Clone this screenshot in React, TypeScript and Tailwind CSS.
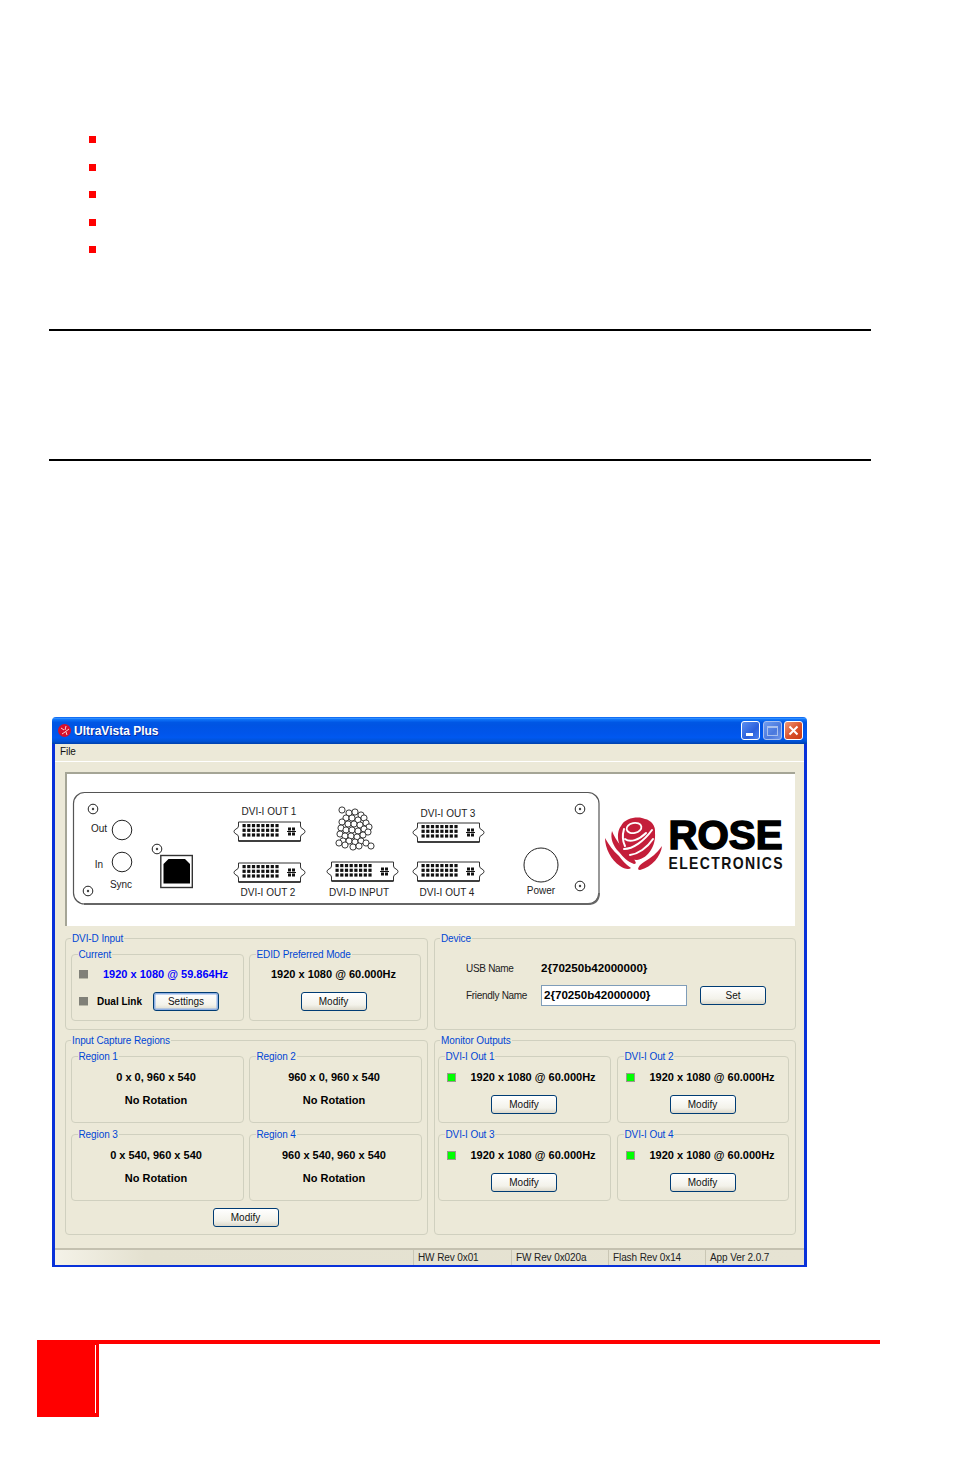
import React from "react";

const font = "font-['Liberation_Sans',Arial,sans-serif]";

const fibers = [
  [342, 810], [349, 813], [355, 812], [361, 815], [346, 818], [352, 818], [358, 820], [364, 818],
  [342, 822], [348, 824], [354, 824], [360, 825], [366, 823], [369, 827], [341, 828], [346, 830],
  [352, 830], [358, 831], [364, 829], [340, 834], [345, 836], [351, 836], [357, 837], [363, 835],
  [368, 832], [343, 841], [349, 841], [355, 842], [361, 841], [339, 843], [345, 845], [353, 847],
  [359, 846], [366, 843], [371, 846],
];

const Connector = ({ x, y }: { x: number; y: number }) => (
  <g transform={`translate(${x} ${y})`}>
    <path
      d="M4.5 0H66.5V4Q66.5 6 69 7Q71 8 71 9.5Q71 11 69 12Q66.5 13 66.5 15V19H4.5V15Q4.5 13 2 12Q0 11 0 9.5Q0 8 2 7Q4.5 6 4.5 4Z"
      fill="#fff"
      stroke="#333"
      strokeWidth="1"
    />
    <path d="M4.5 19H66.5" stroke="#222" strokeWidth="1.5" />
    {[0, 1, 2].map((r) =>
      [0, 1, 2, 3, 4, 5, 6, 7].map((c) => (
        <rect key={`${r}-${c}`} x={8.5 + c * 4.7} y={2 + r * 4.7} width="3.2" height="3.2" fill="#111" />
      ))
    )}
    <path d="M53 9.5H62" stroke="#111" strokeWidth="1" />
    <rect x="54" y="5.5" width="3" height="3" fill="#111" />
    <rect x="58" y="5.5" width="3" height="3" fill="#111" />
    <rect x="54" y="10.5" width="3" height="3" fill="#111" />
    <rect x="58" y="10.5" width="3" height="3" fill="#111" />
  </g>
);

const Screw = ({ x, y }: { x: number; y: number }) => (
  <g>
    <circle cx={x} cy={y} r="4.8" fill="#fff" stroke="#222" strokeWidth="1" />
    <circle cx={x} cy={y} r="1.2" fill="#444" />
  </g>
);

const Label = ({ x, y, children }: { x: number; y: number; children: React.ReactNode }) => (
  <text x={x} y={y} textAnchor="middle" fontSize="10" fill="#222" fontFamily="Liberation Sans, Arial, sans-serif">
    {children}
  </text>
);

const RearPanel = () => (
  <svg width="730" height="154" viewBox="65 772 730 154" className="block">
    <rect x="73.5" y="792.5" width="525.5" height="111.5" rx="11" fill="#fff" stroke="#555" strokeWidth="1.2" />
    <path d="M84 904H588Q599 904 599 893" fill="none" stroke="#666" strokeWidth="1.8" />
    <Screw x={93} y={809} />
    <Screw x={88} y={891} />
    <Screw x={157} y={849} />
    <Screw x={580} y={809} />
    <Screw x={580} y={886} />
    <circle cx="122" cy="830" r="9.8" fill="#fff" stroke="#222" />
    <circle cx="122" cy="862" r="9.8" fill="#fff" stroke="#222" />
    <circle cx="541" cy="865" r="17" fill="#fff" stroke="#222" />
    <Label x={99} y={832}>Out</Label>
    <Label x={99} y={868}>In</Label>
    <Label x={121} y={888}>Sync</Label>
    <Label x={541} y={894}>Power</Label>
    <Label x={269} y={815}>DVI-I OUT 1</Label>
    <Label x={268} y={896}>DVI-I OUT 2</Label>
    <Label x={359} y={896}>DVI-D INPUT</Label>
    <Label x={448} y={817}>DVI-I OUT 3</Label>
    <Label x={447} y={896}>DVI-I OUT 4</Label>
    <rect x="160.8" y="855.5" width="31.5" height="32" fill="#fff" stroke="#333" strokeWidth="1.4" />
    <path d="M163.5 864L168.5 859H185L190 864V883.5H163.5Z" fill="#000" />
    <Connector x={234} y={822} />
    <Connector x={234} y={863} />
    <Connector x={327} y={862} />
    <Connector x={413} y={823} />
    <Connector x={413} y={862} />
    {fibers.map(([x, y]) => (
      <circle key={`${x}-${y}`} cx={x} cy={y} r="3.1" fill="#fff" stroke="#222" strokeWidth="0.9" />
    ))}
    {/* rose logo */}
    <g fill="#c41e3a">
      <path d="M605 838C605 848 611 860 620 866C624 869 629 870 631 868C625 864 622 860 619 856C613 851 609 845 605 838Z" />
      <path d="M662 846C661 856 652 867 640 870C636 870 639 865 644 862C651 858 657 853 662 846Z" />
      <path d="M612 831C610 838 613 846 619 852C623 857 628 862 634 864C638 864 635 860 630 855C623 849 616 841 612 831Z" />
      <path d="M621 826C625 817 640 816 645 819C651 820 656 826 655 833C656 845 649 858 637 860C628 860 621 853 619 843C617 836 618 830 621 826Z" />
    </g>
    <ellipse cx="634" cy="828" rx="7.5" ry="5" fill="none" stroke="#fff" strokeWidth="1.8" transform="rotate(-12 634 828)" />
    <g fill="none" stroke="#fff" strokeWidth="2" strokeLinecap="round">
      <path d="M624 829C622 836 623 842 625 846" />
      <path d="M625 839C630 843 639 840 646 833" />
      <path d="M624 849C633 849 644 841 652 830" />
      <path d="M630 855C638 854 647 848 653 839" />
    </g>
    <text
      x="668.5"
      y="848.5"
      fontSize="41.5"
      fontWeight="700"
      fill="#000"
      stroke="#000"
      strokeWidth="1.6"
      textLength="114"
      lengthAdjust="spacingAndGlyphs"
      fontFamily="Liberation Sans, Arial, sans-serif"
    >
      ROSE
    </text>
    <text
      transform="translate(668.5 869) scale(1 1.22)"
      fontSize="14"
      fontWeight="700"
      fill="#111"
      textLength="114"
      fontFamily="Liberation Sans, Arial, sans-serif"
    >
      ELECTRONICS
    </text>
  </svg>
);

const Group = ({
  title,
  className,
  outer,
  children,
}: {
  title: string;
  className: string;
  outer?: boolean;
  children?: React.ReactNode;
}) => (
  <div className={`relative border border-[#d0d0bf] rounded-[4px] ${className}`}>
    <span
      className={`absolute -top-[7px] ${
        outer ? "left-[5px]" : "left-[5.5px]"
      } bg-[#ece9d8] px-[1px] text-[10px] tracking-[-0.1px] leading-[14px] text-[#0046d5] whitespace-nowrap`}
    >
      {title}
    </span>
    {children}
  </div>
);

const Btn = ({ children, focused }: { children: React.ReactNode; focused?: boolean }) => (
  <button
    className={`block w-[66px] h-[19px] rounded-[3px] border border-[#003c74] bg-[linear-gradient(#ffffff,#f3f2ea_70%,#dcd8ca)] text-[10px] leading-none text-[#111] ${
      focused ? "shadow-[inset_0_0_0_1.5px_#8fb0e4]" : ""
    }`}
  >
    {children}
  </button>
);

const Led = ({ on }: { on?: boolean }) => (
  <span
    className={`block shrink-0 w-[9px] h-[9px] ${
      on ? "bg-[#00ff00] border border-[#9a9a8c]" : "bg-[#808078] border-b border-[#b8b8a8]"
    }`}
  />
);

const Bold = ({ children, className = "" }: { children: React.ReactNode; className?: string }) => (
  <span className={`font-bold text-[11px] leading-[14px] text-black whitespace-nowrap ${className}`}>{children}</span>
);

const Region = ({ title, pos }: { title: string; pos: string }) => (
  <Group title={title} className="w-[173px] h-[67px] flex flex-col items-center pt-[13px] gap-[9px] pr-[3px]">
    <Bold>{pos}</Bold>
    <Bold>No Rotation</Bold>
  </Group>
);

const Output = ({ title, width }: { title: string; width: string }) => (
  <Group title={title} className={`${width} h-[67px] flex flex-col items-center pt-[13px]`}>
    <div className="self-start flex items-center pl-[8px] gap-[14.5px] h-[14px]">
      <Led on />
      <Bold>1920 x 1080 @ 60.000Hz</Bold>
    </div>
    <div className="mt-[11px] pr-[1px]">
      <Btn>Modify</Btn>
    </div>
  </Group>
);

const StatusCell = ({ children, width }: { children: React.ReactNode; width: string }) => (
  <div className={`${width} h-full border-l border-[#c9c6b4] pl-[4px] text-[10px] tracking-[-0.1px] leading-[16px] text-[#222] whitespace-nowrap`}>
    {children}
  </div>
);

const Window = () => (
  <div className={`ml-[52px] w-[755px] h-[550px] flex flex-col ${font}`}>
    <div className="h-[27px] shrink-0 rounded-t-[4px] flex items-center pl-[5px] pr-[4px] bg-[linear-gradient(#0058ee_0%,#3593ff_5%,#0f74f8_9%,#0057e5_20%,#0054e3_30%,#0055eb_60%,#0058f0_76%,#0052d6_90%,#0040ab_100%)]">
      <svg width="15" height="15" viewBox="0 0 15 15" className="shrink-0">
        <circle cx="7.5" cy="7.5" r="6.5" fill="#d8102c" />
        <path d="M4 5L7 7M9 3L8 7M12 6L8 9M5 11L8 9M10 12L9 9" stroke="#ffd0d0" strokeWidth="1" />
      </svg>
      <span className="ml-[2px] font-bold text-[12px] text-white [text-shadow:1px_1px_0_#0f2f9a] whitespace-nowrap">UltraVista Plus</span>
      <div className="ml-auto flex gap-[2.5px]">
        <div className="w-[19px] h-[19px] rounded-[3px] border border-white flex items-end pl-[4px] pb-[3px] bg-[linear-gradient(135deg,#5d8ff0,#2a5fdc_60%,#4a7fef)]">
          <span className="block w-[7px] h-[3px] bg-white" />
        </div>
        <div className="w-[19px] h-[19px] rounded-[3px] border border-[#a9c0ee] flex items-center justify-center bg-[linear-gradient(135deg,#6f9cf0,#4a78dd_60%,#6f96ea)]">
          <span className="block w-[11px] h-[10px] border border-[#a9c0ee] border-t-2" />
        </div>
        <div className="w-[19px] h-[19px] rounded-[3px] border border-white flex items-center justify-center bg-[linear-gradient(135deg,#ef9a78,#d9502a_55%,#c83a16)]">
          <svg width="11" height="11" viewBox="0 0 11 11">
            <path d="M1.5 1.5L9.5 9.5M9.5 1.5L1.5 9.5" stroke="#fff" strokeWidth="2" />
          </svg>
        </div>
      </div>
    </div>

    <div className="flex-1 flex flex-col min-h-0 border-x-[3px] border-b-[2px] border-[#0831d9] bg-[#ece9d8]">
      <div className="h-[18px] shrink-0 border-b border-white pl-[5px] text-[10px] tracking-[-0.1px] leading-[15px] text-[#111]">File</div>

      <div className="ml-[10px] mt-[10px] w-[730px] h-[154px] shrink-0 bg-white border-t-2 border-l-2 border-t-[#a5a596] border-l-[#a5a596] overflow-hidden [&>svg]:-mt-[2px] [&>svg]:-ml-[2px]">
        <RearPanel />
      </div>

      <div className="ml-[10px] mt-[12px] flex gap-[6px]">
        <Group outer title="DVI-D Input" className="w-[363px] h-[92px] flex gap-[5px] pl-[5px] pt-[15px]">
          <Group title="Current" className="w-[173px] h-[67px] px-[7px]">
            <div className="flex items-center h-[14px] mt-[12px] gap-[15px]">
              <Led />
              <span className="font-bold text-[11px] leading-[14px] text-[#0000ff] whitespace-nowrap">1920 x 1080 @ 59.864Hz</span>
            </div>
            <div className="flex items-center mt-[11px] gap-[9px] h-[19px]">
              <Led />
              <span className="font-bold text-[10px] leading-[14px] text-black whitespace-nowrap">Dual Link</span>
              <div className="ml-[2px]">
                <Btn focused>Settings</Btn>
              </div>
            </div>
          </Group>
          <Group title="EDID Preferred Mode" className="w-[172px] h-[67px] flex flex-col items-center pr-[3px]">
            <Bold className="mt-[12px]">1920 x 1080 @ 60.000Hz</Bold>
            <div className="mt-[11px]">
              <Btn>Modify</Btn>
            </div>
          </Group>
        </Group>

        <Group outer title="Device" className="w-[362px] h-[92px] pl-[31px]">
          <div className="flex items-center h-[14px] mt-[22px]">
            <span className="w-[75px] text-[10px] tracking-[-0.3px] text-[#222] whitespace-nowrap">USB Name</span>
            <span className="font-bold text-[11.6px] leading-[14px] text-black whitespace-nowrap">2{"{70250b42000000}"}</span>
          </div>
          <div className="flex items-center h-[21px] mt-[10px]">
            <span className="w-[75px] text-[10px] tracking-[-0.3px] text-[#222] whitespace-nowrap">Friendly Name</span>
            <div className="w-[146px] h-[21px] bg-white border border-[#7f9db9] pl-[2px] font-bold text-[11.6px] leading-[18px] text-black whitespace-nowrap">
              2{"{70250b42000000}"}
            </div>
            <div className="ml-[13px]">
              <Btn>Set</Btn>
            </div>
          </div>
        </Group>
      </div>

      <div className="ml-[10px] mt-[10px] flex gap-[6px]">
        <Group outer title="Input Capture Regions" className="w-[363px] h-[195px] pl-[5px] pt-[15px]">
          <div className="flex gap-[5px]">
            <Region title="Region 1" pos="0 x 0, 960 x 540" />
            <Region title="Region 2" pos="960 x 0, 960 x 540" />
          </div>
          <div className="flex gap-[5px] mt-[11px]">
            <Region title="Region 3" pos="0 x 540, 960 x 540" />
            <Region title="Region 4" pos="960 x 540, 960 x 540" />
          </div>
          <div className="flex justify-center pr-[7px] mt-[7px]">
            <Btn>Modify</Btn>
          </div>
        </Group>

        <Group outer title="Monitor Outputs" className="w-[362px] h-[195px] pl-[3px] pt-[15px]">
          <div className="flex gap-[6px]">
            <Output title="DVI-I Out 1" width="w-[173px]" />
            <Output title="DVI-I Out 2" width="w-[172px]" />
          </div>
          <div className="flex gap-[6px] mt-[11px]">
            <Output title="DVI-I Out 3" width="w-[173px]" />
            <Output title="DVI-I Out 4" width="w-[172px]" />
          </div>
        </Group>
      </div>

      <div className="mt-auto h-[17px] shrink-0 flex border-t-2 border-[#c4c1b0] bg-[linear-gradient(90deg,#f4f2e8,#e4e1d0_12%,#e6e3d3)]">
        <div className="w-[358px]" />
        <StatusCell width="w-[98px]">HW Rev 0x01</StatusCell>
        <StatusCell width="w-[97px]">FW Rev 0x020a</StatusCell>
        <StatusCell width="w-[97px]">Flash Rev 0x14</StatusCell>
        <StatusCell width="w-[99px]">App Ver 2.0.7</StatusCell>
      </div>
    </div>
  </div>
);

export default function App() {
  return (
    <div className="w-[954px] h-[1475px] bg-white overflow-hidden">
      <ul className="ml-[89px] pt-[136px] flex flex-col gap-[20.6px]">
        {[0, 1, 2, 3, 4].map((i) => (
          <li key={i} className="block w-[7px] h-[7px] bg-[#ff0000]" />
        ))}
      </ul>

      <div className="ml-[49px] mt-[76px] w-[822px] h-[2px] bg-black" />
      <div className="ml-[49px] mt-[128px] w-[822px] h-[2px] bg-black" />

      <div className="mt-[256px]">
        <Window />
      </div>

      <div className="mt-[73px] ml-[37px] flex items-start">
        <div className="w-[62px] h-[77px] bg-[#ff0000] flex justify-end pt-[5px] pb-[4px] pr-[3px]">
          <span className="block w-[1px] bg-white" />
        </div>
        <div className="w-[781px] h-[4px] bg-[#ff0000]" />
      </div>
    </div>
  );
}
